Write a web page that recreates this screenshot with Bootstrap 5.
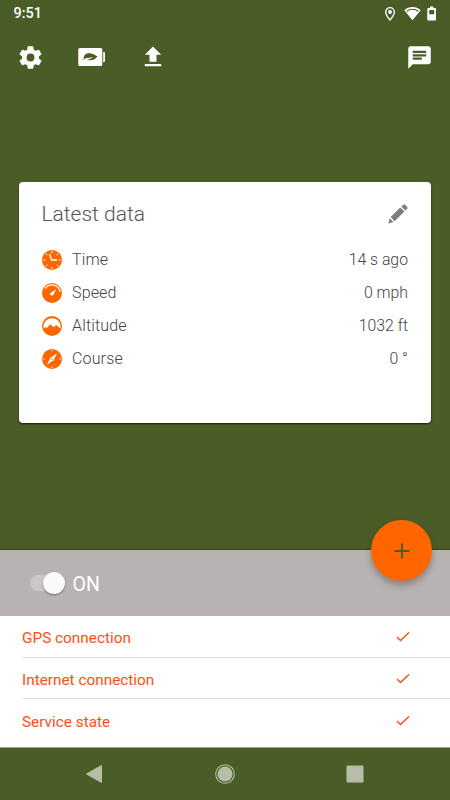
<!DOCTYPE html>
<html lang="en">
<head>
<meta charset="utf-8">
<meta name="viewport" content="width=device-width, initial-scale=1">
<title>Latest data</title>
<link href="https://cdn.jsdelivr.net/npm/bootstrap@5.3.0/dist/css/bootstrap.min.css" rel="stylesheet">
<style>
:root { --olive:#4b5d26; --flame:#ff6600; }
body { font-family:Roboto,sans-serif; background:var(--olive); height:800px; overflow:hidden; }
svg { display:block; flex:none; }
.status-bar { height:28px; padding:0 13px 0 13.5px; font-size:14.4px; font-weight:500; line-height:28px; }
.status-icons { margin-right:-1px; }
.tool-bar { height:58px; padding:0 17px; }
.leaf-battery { margin-left:34px; }
.upload { margin-left:33px; }
.data-card { margin:96px 19.5px 0 19px; height:241px; border-radius:4px; padding:17px 22.5px; box-shadow:0 1px 2px rgba(0,0,0,.65); }
.data-title { font-size:21px; line-height:30px; color:#555; font-weight:300; }
.edit-icon { margin:5px 0 0; }
.data-row { height:33px; font-size:16px; color:#444; font-weight:300; }
.data-list { margin-top:14px; }
.row-name { margin-left:10.5px; letter-spacing:.15px; }
.row-value { font-size:15.8px; }
.switch-bar { height:66px; margin-top:127px; background:#b8b3b2; padding-left:29.5px; box-shadow:0 -1px 1px rgba(0,0,0,.2); }
.track { width:30px; height:16px; border-radius:8px; background:#cac7c6; }
.thumb { width:22px; height:22px; border-radius:50%; background:#fafafa; top:-3px; left:13px; box-shadow:0 1px 2px rgba(0,0,0,.4); }
.switch-label { font-size:19.5px; margin-left:13px; padding-top:3px; }
.fab { width:61px; height:61px; right:18px; top:-30px; background:var(--flame); box-shadow:0 4px 7px rgba(0,0,0,.28); }
.state-list { height:131px; padding-left:22px; color:#ff5014; font-size:15.35px; }
.state-row { height:41.7px; padding-right:39px; border-bottom:1px solid #e2e2e2; }
.state-row span { padding-top:4px; }
.state-row svg { margin-top:2px; }
.state-row:last-child { border-bottom:0; }
.nav-keys { height:53px; padding:0 86px 0 85px; border-top:1px solid #9ba48b; }
</style>
<script src="https://cdn.jsdelivr.net/npm/bootstrap@5.3.0/dist/js/bootstrap.bundle.min.js"></script>
</head>
<body class="d-flex flex-column">
<header class="text-white">
  <div class="status-bar d-flex justify-content-between align-items-center">
    <span>9:51</span>
    <div class="status-icons d-flex align-items-center">
      <svg width="12" height="16" viewBox="0 0 12 16"><path d="M6 1.700a4.300 4.300 0 0 0-4.300 4.300c0 3.100 4.300 8 4.300 8s4.300-4.900 4.300-8A4.300 4.300 0 0 0 6 1.700z" fill="none" stroke="#fff" stroke-width="1.300"/><circle cx="6" cy="6" r="1.900" fill="#fff"/></svg>
      <svg class="ms-2" width="17" height="16" viewBox="0 0 17 16"><path d="M.3 4.200C5-.1 12-.1 16.700 4.200L8.500 14.200z" fill="#fff"/><path d="M2.600 5.200C6 2.600 11 2.600 14.400 5.200" fill="none" stroke="#4b5d26" stroke-width="1.200"/></svg>
      <svg class="ms-1" width="13" height="16" viewBox="0 0 13 16"><path d="M5 .5h3.400v1.500H10a1 1 0 0 1 1 1v10.500a1 1 0 0 1-1 1H3.300a1 1 0 0 1-1-1V3a1 1 0 0 1 1-1H5z" fill="#fff"/><path d="M4.200 4h5v4.300h-5z" fill="#4b5d26"/></svg>
    </div>
  </div>
  <div class="tool-bar d-flex align-items-center">
    <svg width="27" height="27" viewBox="0 0 24 24" fill="#fff"><path d="M19.43 12.98c.04-.32.07-.64.07-.98s-.03-.66-.07-.98l2.11-1.65c.19-.15.24-.42.12-.64l-2-3.46c-.12-.22-.39-.3-.61-.22l-2.49 1c-.52-.4-1.08-.73-1.69-.98l-.38-2.65C14.46 2.18 14.25 2 14 2h-4c-.25 0-.46.18-.49.42l-.38 2.65c-.61.25-1.17.59-1.69.98l-2.49-1c-.23-.09-.49 0-.61.22l-2 3.46c-.13.22-.07.49.12.64l2.11 1.65c-.04.32-.07.65-.07.98s.03.66.07.98l-2.11 1.65c-.19.15-.24.42-.12.64l2 3.46c.12.22.39.3.61.22l2.49-1c.52.4 1.08.73 1.69.98l.38 2.65c.03.24.24.42.49.42h4c.25 0 .46-.18.49-.42l.38-2.65c.61-.25 1.17-.59 1.69-.98l2.49 1c.23.09.49 0 .61-.22l2-3.46c.12-.22.07-.49-.12-.64zM12 15.5a3.5 3.5 0 1 1 0-7 3.5 3.5 0 0 1 0 7z"/></svg>
    <svg class="leaf-battery" width="28" height="20" viewBox="0 0 28 20"><rect x=".3" y="1" width="24" height="18" rx="1.600" fill="#fff"/><path d="M25.200 5h.8a1 1 0 0 1 1 1v8a1 1 0 0 1-1 1h-.8z" fill="#fff"/><path d="M6 12c-1.300-4.500 3-6.200 7-5.600 3 .3 4.500 2.200 6.500 2.800-1.500 3-6.200 5.200-10.700 3.600 2.700-.3 4.700-1.300 6.500-3.100-2.700 1.200-4.500 1.100-6.600 1.300C7.300 11.100 6.800 12.200 4.500 12.700L4.300 12z" fill="#4b5d26"/></svg>
    <svg class="upload" width="28" height="28" viewBox="0 0 24 24" fill="#fff"><path d="M9 16h6v-6h4l-7-7-7 7h4zM5 18h14v2H5z"/></svg>
    <svg class="ms-auto" width="27" height="27" viewBox="0 0 24 24" fill="#fff"><path d="M20 2H4c-1.100 0-1.990.9-1.990 2L2 22l4-4h14c1.100 0 2-.9 2-2V4c0-1.100-.9-2-2-2zM6 9h12v2H6V9zm8 5H6v-2h8v2zm4-6H6V6h12v2z"/></svg>
  </div>
</header>

<main class="data-card bg-white">
  <div class="d-flex justify-content-between align-items-start">
    <div class="data-title">Latest data</div>
    <svg class="edit-icon" width="20" height="20" viewBox="0 0 20 20" fill="#7d7d7d"><path d="M.3 19.500L1.700 14.300 5.500 18.100zM2.600 13.100L12.300 3.600 16.400 7.600 6.600 17.200zM13.300 2.600L15 .9Q16.200-.1 17.400 1L19 2.700Q20 3.900 19 5L17.300 6.600z"/></svg>
  </div>
  <div class="data-list">
    <div class="data-row d-flex align-items-center">
      <svg width="20" height="20" viewBox="0 0 20 20"><circle cx="10" cy="10" r="10" fill="#ff6600"/><path d="M10 1.300v2M10 16.700v2M1.300 10h2M16.700 10h2M4.200 4.200l1 1M14.800 5.200l1-1M4.200 15.800l1-1M14.800 14.800l1 1" stroke="#fff" stroke-width="1.100"/><path d="M7.500 4l2.200 6H15" fill="none" stroke="#fff" stroke-width="1.400"/></svg>
      <span class="row-name">Time</span><span class="row-value ms-auto">14 s ago</span>
    </div>
    <div class="data-row d-flex align-items-center">
      <svg width="20" height="20" viewBox="0 0 20 20"><circle cx="10" cy="10" r="10" fill="#ff6600"/><path d="M3.300 5.500A8 8 0 0 1 17.900 8.800" fill="none" stroke="#fff" stroke-width="1.400"/><path d="M14.300 6.200l-2.800 5.200a1.700 1.700 0 1 1-2.300-2z" fill="#fff"/></svg>
      <span class="row-name">Speed</span><span class="row-value ms-auto">0 mph</span>
    </div>
    <div class="data-row d-flex align-items-center">
      <svg width="20" height="20" viewBox="0 0 20 20"><circle cx="10" cy="10" r="10" fill="#ff6600"/><path d="M1.700 12.500A8.500 8.500 0 1 1 18.300 12.500L14.200 9 11.800 11.200 8.200 8.200 5 12 3.800 11z" fill="#fff"/></svg>
      <span class="row-name">Altitude</span><span class="row-value ms-auto">1032 ft</span>
    </div>
    <div class="data-row d-flex align-items-center">
      <svg width="20" height="20" viewBox="0 0 20 20"><circle cx="10" cy="10" r="10" fill="#ff6600"/><path d="M10 1v1.400M10 17.600V19M1 10h1.400M17.600 10H19" stroke="#fff"/><path d="M15.200 4.300L11.500 11.300 4.800 15.700 8.500 8.700z" fill="#fff"/><circle cx="10" cy="10" r=".8" fill="#ff6600"/></svg>
      <span class="row-name">Course</span><span class="row-value ms-auto">0 °</span>
    </div>
  </div>
</main>

<section class="switch-bar d-flex align-items-center position-relative text-white">
  <div class="track position-relative"><div class="thumb position-absolute"></div></div>
  <span class="switch-label">ON</span>
  <button class="fab btn border-0 rounded-circle p-0 position-absolute d-flex align-items-center justify-content-center" aria-label="Add">
    <svg width="16" height="16" viewBox="0 0 16 16"><path d="M8 .5v15M.5 8h15" stroke="#4b5d26" stroke-width="2"/></svg>
  </button>
</section>

<section class="state-list bg-white">
  <div class="state-row d-flex align-items-center justify-content-between"><span>GPS connection</span><svg width="16" height="12" viewBox="0 0 16 12"><path d="M2 6l3.500 3.500L14 1.500" fill="none" stroke="#ff4810" stroke-width="1.400"/></svg></div>
  <div class="state-row d-flex align-items-center justify-content-between"><span>Internet connection</span><svg width="16" height="12" viewBox="0 0 16 12"><path d="M2 6l3.500 3.500L14 1.500" fill="none" stroke="#ff4810" stroke-width="1.400"/></svg></div>
  <div class="state-row d-flex align-items-center justify-content-between"><span>Service state</span><svg width="16" height="12" viewBox="0 0 16 12"><path d="M2 6l3.500 3.500L14 1.500" fill="none" stroke="#ff4810" stroke-width="1.400"/></svg></div>
</section>

<nav class="nav-keys d-flex align-items-center justify-content-between">
  <svg width="18" height="20" viewBox="0 0 18 20"><path d="M1.500 10L16.500 1.500v17z" fill="#b7bea8" stroke="#b7bea8" stroke-linejoin="round"/></svg>
  <svg width="20" height="20" viewBox="0 0 20 20"><circle cx="10" cy="10" r="9.300" fill="none" stroke="#b7bea8" stroke-width="1.100"/><circle cx="10" cy="10" r="7.500" fill="#b7bea8"/></svg>
  <svg width="18" height="18" viewBox="0 0 18 18"><rect x=".5" y=".5" width="17" height="17" rx="1.200" fill="#b7bea8"/></svg>
</nav>
</body>
</html>
